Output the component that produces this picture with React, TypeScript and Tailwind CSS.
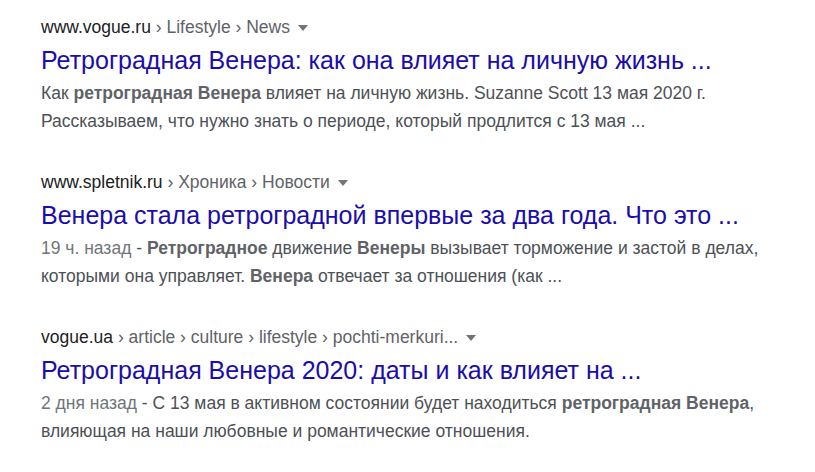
import React from "react";

type Part = { t: string; b?: boolean; g?: boolean };

const results: { domain: string; path: string; title: string; lines: Part[][] }[] = [
  {
    domain: "www.vogue.ru",
    path: " › Lifestyle › News",
    title: "Ретроградная Венера: как она влияет на личную жизнь ...",
    lines: [
      [
        { t: "Как " },
        { t: "ретроградная Венера", b: true },
        { t: " влияет на личную жизнь. Suzanne Scott 13 мая 2020 г." },
      ],
      [{ t: "Рассказываем, что нужно знать о периоде, который продлится с 13 мая ..." }],
    ],
  },
  {
    domain: "www.spletnik.ru",
    path: " › Хроника › Новости",
    title: "Венера стала ретроградной впервые за два года. Что это ...",
    lines: [
      [
        { t: "19 ч. назад", g: true },
        { t: " - " },
        { t: "Ретроградное", b: true },
        { t: " движение " },
        { t: "Венеры", b: true },
        { t: " вызывает торможение и застой в делах," },
      ],
      [
        { t: "которыми она управляет. " },
        { t: "Венера", b: true },
        { t: " отвечает за отношения (как ..." },
      ],
    ],
  },
  {
    domain: "vogue.ua",
    path: " › article › culture › lifestyle › pochti-merkuri...",
    title: "Ретроградная Венера 2020: даты и как влияет на ...",
    lines: [
      [
        { t: "2 дня назад", g: true },
        { t: " - С 13 мая в активном состоянии будет находиться " },
        { t: "ретроградная Венера", b: true },
        { t: "," },
      ],
      [{ t: "влияющая на наши любовные и романтические отношения." }],
    ],
  },
];

export default function App() {
  return (
    <div
      className="w-[815px] h-[472px] bg-white overflow-hidden pl-[41px] pt-[16px] flex flex-col gap-[36px]"
      style={{ fontFamily: '"Liberation Sans", Arial, sans-serif' }}
    >
      {results.map((r, i) => (
        <div key={i} className="flex flex-col">
          <div className="h-[22px] text-[17.5px] leading-[22px] whitespace-nowrap">
            <span className="text-[#202124]">{r.domain}</span>
            <span className="text-[#5f6368]">{r.path}</span>
            <svg
              width="10"
              height="6"
              viewBox="0 0 10 6"
              className="inline-block ml-[8px] align-middle mb-[1px]"
            >
              <path d="M0 0 L10 0 L5 6 Z" fill="#70757a" />
            </svg>
          </div>
          <div className="mt-[7px] text-[25px] leading-[30px] text-[#1a0dab] whitespace-nowrap">
            {r.title}
          </div>
          <div className="mt-[4px] text-[17.5px] leading-[28px] text-[#4d5156]">
            {r.lines.map((l, j) => (
              <div key={j} className="whitespace-nowrap">
                {l.map((p, k) => (
                  <span
                    key={k}
                    className={p.b ? "font-bold text-[#5f6368]" : p.g ? "text-[#70757a]" : ""}
                  >
                    {p.t}
                  </span>
                ))}
              </div>
            ))}
          </div>
        </div>
      ))}
    </div>
  );
}
